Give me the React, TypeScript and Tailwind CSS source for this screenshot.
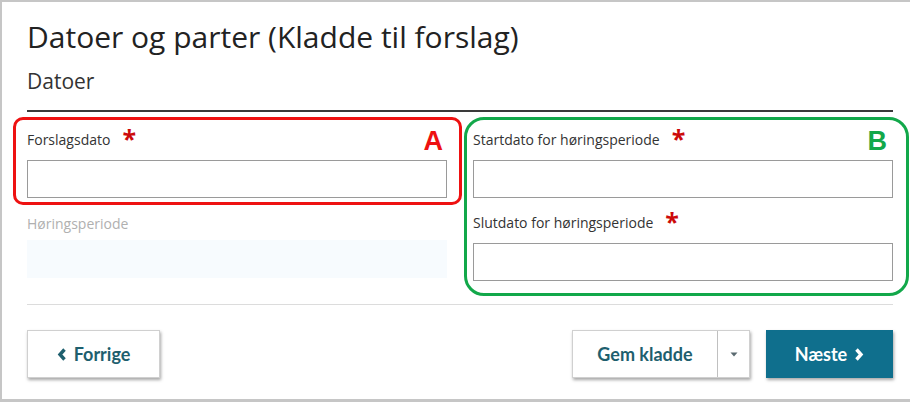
import React from 'react';

const Field = ({ label }: { label: string }) => (
  <div>
    <div className="flex items-start h-[20px] text-[14px] leading-[20px] text-[#333]">
      <span>{label}</span>
      <span className="ml-[12px] -mt-[4px] text-[25px] leading-none font-bold text-[#cc0a0a]">*</span>
    </div>
    <div className="mt-[10px] h-[38px] border border-[#9a9a9a] bg-white" />
  </div>
);

const ChevronLeft = () => (
  <svg width="10" height="13" viewBox="0 0 10 13" className="mr-[7px]">
    <path d="M7.5 1.5 L3 6.5 L7.5 11.5" fill="none" stroke="currentColor" strokeWidth="3.4" />
  </svg>
);

const ChevronRight = () => (
  <svg width="10" height="13" viewBox="0 0 10 13" className="ml-[7px]">
    <path d="M2.5 1.5 L7 6.5 L2.5 11.5" fill="none" stroke="currentColor" strokeWidth="3.4" />
  </svg>
);

export default function App() {
  return (
    <div
      className="relative w-[910px] h-[402px] overflow-hidden bg-white border-l-2 border-t-2 border-b-[3px] border-[#c6c6c6]"
      style={{ fontFamily: '"Open Sans", "Noto Sans", sans-serif' }}
    >
      <div className="pl-[25px] pr-[17px] pt-[15px]">
        <h1 className="text-[30px] leading-[40px] text-[#222] font-normal">
          Datoer og parter (Kladde til forslag)
        </h1>
        <div className="mt-[10px] text-[21px] leading-[28px] text-[#333]">Datoer</div>
        <div className="mt-[15px] h-[2px] bg-[#3a3a3a]" />

        <div className="grid grid-cols-2 gap-x-[26px] mt-[18px]">
          <div>
            <Field label="Forslagsdato" />
            <div className="mt-[16px] h-[20px] text-[14px] leading-[20px] text-[#b0b0b0]">Høringsperiode</div>
            <div className="mt-[6px] h-[38px] bg-[#f7fbfe]" />
          </div>
          <div>
            <Field label="Startdato for høringsperiode" />
            <div className="mt-[15px]">
              <Field label="Slutdato for høringsperiode" />
            </div>
          </div>
        </div>

        <div className="mt-[23px] h-px bg-[#dcdcdc]" />

        <div
          className="mt-[25px] flex items-center justify-between text-[18px] font-bold"
          style={{ fontFamily: 'Lato, "Open Sans", sans-serif' }}
        >
          <button className="flex items-center justify-center w-[133px] h-[48px] bg-white border border-[#d0d0d0] text-[#1e5f6e] shadow-[1px_2px_3px_rgba(0,0,0,0.35)]">
            <ChevronLeft />
            Forrige
          </button>
          <div className="flex items-center gap-[16px]">
            <div className="flex h-[48px] bg-white border border-[#d0d0d0] shadow-[1px_2px_3px_rgba(0,0,0,0.35)]">
              <button className="w-[144px] text-[#1e5f6e]">Gem kladde</button>
              <button className="w-[32px] flex items-center justify-center border-l border-[#c0c0c0]">
                <svg width="8" height="5" viewBox="0 0 8 5">
                  <path d="M0.5 0.5 L7.5 0.5 L4 4.5 Z" fill="#5a6a70" />
                </svg>
              </button>
            </div>
            <button className="flex items-center justify-center w-[127px] h-[48px] bg-[#0f6f8d] text-white shadow-[1px_2px_3px_rgba(0,0,0,0.35)]">
              Næste
              <ChevronRight />
            </button>
          </div>
        </div>
      </div>

      {/* annotation overlays */}
      <div className="absolute left-[11px] top-[115px] w-[449px] h-[88px] border-[3px] border-[#ee1111] rounded-[10px] pointer-events-none">
        <span
          className="absolute right-[16px] top-[7px] text-[27px] leading-[28px] font-bold text-[#ee1111]"
          style={{ fontFamily: '"Liberation Sans", Arial, sans-serif' }}
        >
          A
        </span>
      </div>
      <div className="absolute left-[462px] top-[115px] w-[445px] h-[179px] border-[3px] border-[#12a84a] rounded-[20px] pointer-events-none">
        <span
          className="absolute right-[19px] top-[7px] text-[27px] leading-[28px] font-bold text-[#12a84a]"
          style={{ fontFamily: '"Liberation Sans", Arial, sans-serif' }}
        >
          B
        </span>
      </div>
    </div>
  );
}
